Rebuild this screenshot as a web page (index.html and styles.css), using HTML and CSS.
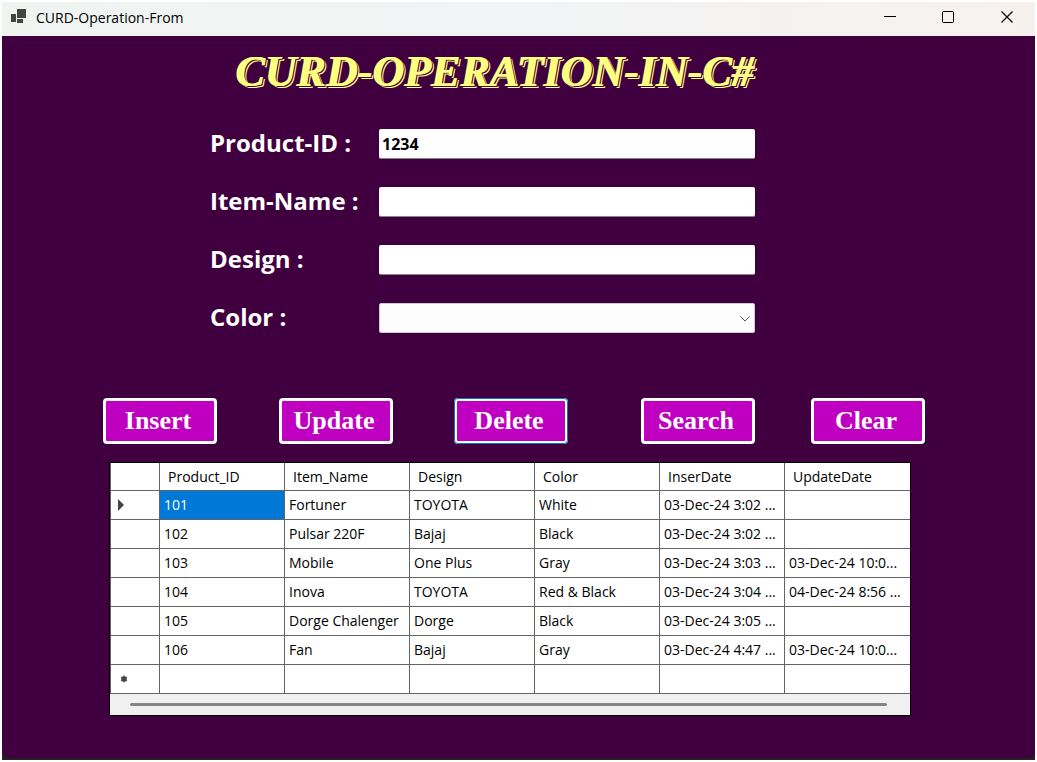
FILE: index.html
```html
<!DOCTYPE html>
<html lang="en">
<head>
<meta charset="utf-8">
<title>CURD-Operation-From</title>
<link rel="stylesheet" href="styles.css">
</head>
<body>
<div class="window">
  <header class="titlebar">
    <svg class="app-icon" width="16" height="16" viewBox="0 0 16 16" aria-hidden="true">
      <rect x="6" y="0" width="9" height="9" fill="#444"/>
      <rect x="0" y="5" width="5" height="8" fill="#444"/>
      <rect x="6" y="10" width="6" height="4" fill="#444"/>
    </svg>
    <span class="caption">CURD-Operation-From</span>
    <div class="window-controls">
      <button type="button" class="control" aria-label="Minimize"><svg width="12" height="12" viewBox="0 0 12 12"><path d="M0 5.5H12" stroke="#000"/></svg></button>
      <button type="button" class="control" aria-label="Maximize"><svg width="12" height="12" viewBox="0 0 12 12"><rect x=".5" y=".5" width="11" height="11" rx="1" fill="none" stroke="#000"/></svg></button>
      <button type="button" class="control" aria-label="Close"><svg width="12" height="12" viewBox="0 0 12 12"><path d="M.5 .5L11.5 11.5M11.5 .5L.5 11.5" stroke="#000" stroke-width="1.2"/></svg></button>
    </div>
  </header>
  <main class="client">
    <h1 class="heading">CURD-OPERATION-IN-C#</h1>
    <form class="fields">
      <label for="pid">Product-ID :</label><input id="pid" class="field" type="text" value="1234">
      <label for="item">Item-Name :</label><input id="item" class="field" type="text">
      <label for="design">Design :</label><input id="design" class="field" type="text">
      <label for="color">Color :</label>
      <div class="combo">
        <select id="color" class="field"><option></option><option>White</option><option>Black</option><option>Gray</option></select>
        <svg class="chevron" width="10" height="6" viewBox="0 0 10 6" aria-hidden="true"><path d="M.5 .5L5 5L9.5 .5" fill="none" stroke="#555"/></svg>
      </div>
    </form>
    <div class="actions">
      <button type="button" class="action">Insert</button>
      <button type="button" class="action">Update</button>
      <button type="button" class="action focused">Delete</button>
      <button type="button" class="action">Search</button>
      <button type="button" class="action">Clear</button>
    </div>
    <div class="grid">
      <table>
        <colgroup><col class="marker"><col><col><col><col><col><col></colgroup>
        <thead><tr><th></th><th>Product_ID</th><th>Item_Name</th><th>Design</th><th>Color</th><th>InserDate</th><th>UpdateDate</th></tr></thead>
        <tbody>
          <tr><td class="mark"><svg width="6" height="12" viewBox="0 0 6 12"><path d="M0 0L6 6L0 12Z" fill="#444"/></svg></td><td class="selected">101</td><td>Fortuner</td><td>TOYOTA</td><td>White</td><td>03-Dec-24 3:02 ...</td><td></td></tr>
          <tr><td></td><td>102</td><td>Pulsar 220F</td><td>Bajaj</td><td>Black</td><td>03-Dec-24 3:02 ...</td><td></td></tr>
          <tr><td></td><td>103</td><td>Mobile</td><td>One Plus</td><td>Gray</td><td>03-Dec-24 3:03 ...</td><td>03-Dec-24 10:0...</td></tr>
          <tr><td></td><td>104</td><td>Inova</td><td>TOYOTA</td><td>Red &amp; Black</td><td>03-Dec-24 3:04 ...</td><td>04-Dec-24 8:56 ...</td></tr>
          <tr><td></td><td>105</td><td>Dorge Chalenger</td><td>Dorge</td><td>Black</td><td>03-Dec-24 3:05 ...</td><td></td></tr>
          <tr><td></td><td>106</td><td>Fan</td><td>Bajaj</td><td>Gray</td><td>03-Dec-24 4:47 ...</td><td>03-Dec-24 10:0...</td></tr>
          <tr><td class="mark new"><svg width="8" height="8" viewBox="0 0 8 8"><path d="M4 .5V7.5M1 2L7 6M7 2L1 6" stroke="#777" stroke-width="1.4"/><circle cx="4" cy="4" r="2.8" fill="#444"/></svg></td><td></td><td></td><td></td><td></td><td></td><td></td></tr>
        </tbody>
      </table>
      <div class="scrollbar"><div class="thumb"></div></div>
    </div>
  </main>
</div>
</body>
</html>
```
FILE: styles.css
```css
* { box-sizing: border-box; }
body {
  margin: 0;
  padding: 2px;
  height: 100vh;
  background: #fff;
  font-family: "Open Sans", "Noto Sans", sans-serif;
}
.window {
  display: flex;
  flex-direction: column;
  height: 100%;
  padding-bottom: 2px;
  background: #222;
}
.titlebar {
  display: flex;
  align-items: center;
  height: 34px;
  padding: 0 0 4px 9px;
  gap: 9px;
  background: linear-gradient(90deg, #f0f4f1, #f1f3f4 50%, #f7f1ee);
}
.caption { flex: 1; padding-top: 2px; font-size: 14px; line-height: 20px; }
.window-controls { display: flex; }
.control {
  display: grid;
  place-items: center;
  width: 58px;
  height: 30px;
  padding: 0;
  border: 0;
  background: none;
}
.control:last-child { width: 56px; margin-left: 2px; }
.client {
  flex: 1;
  padding: 12px 110px 0 101px;
  border-radius: 0 0 6px 6px;
  background: #400040;
}
.heading {
  margin: 0 0 33px 132px;
  color: #ffff80;
  font: italic bold 44px/48px "Liberation Serif", serif;
  white-space: nowrap;
  text-shadow: 1px 0 #ffff80, 2px 1px #400040, 3px 2px #ffff80;
}
.fields {
  display: grid;
  grid-template-columns: 169px minmax(0, 376px);
  grid-auto-rows: 30px;
  row-gap: 28px;
  align-items: center;
  margin-left: 107px;
}
.fields label {
  padding-bottom: 2px;
  color: #fff;
  font-size: 24px;
  font-weight: 700;
  line-height: 30px;
  white-space: nowrap;
}
.field {
  display: block;
  width: 100%;
  height: 30px;
  padding: 0 3px;
  border: 0;
  border-bottom: 1px solid #868686;
  border-radius: 2px;
  background: #fff;
  color: #000;
  font: bold 16px/24px "Open Sans", "Noto Sans", sans-serif;
}
.combo { position: relative; }
select.field { appearance: none; background: #fdfdfd; border: 1px solid #ccc; }
.chevron { position: absolute; right: 5px; top: 13px; pointer-events: none; }
.actions {
  display: grid;
  grid-template-columns: 176fr 175fr 187fr 170fr 114px;
  margin: 65px 0 18px;
}
.action {
  width: 114px;
  height: 46px;
  padding: 0 4px 0 0;
  border: 3px solid #fff;
  border-radius: 4px;
  background: #c000c0;
  color: #fff;
  font: bold 26px/34px "Liberation Serif", serif;
}
.focused { outline: 1px solid #0078d4; outline-offset: -1px; }
.grid {
  margin: 0 14px 0 6px;
  border: 1px solid #000;
  background: #f0f0f0;
}
table {
  width: 100%;
  border-collapse: separate;
  border-spacing: 0;
  table-layout: fixed;
  background: #fff;
  font-size: 14px;
  line-height: 20px;
}
.marker { width: 50px; }
th, td {
  height: 29px;
  padding: 0 0 0 4px;
  border: 1px solid #646464;
  border-width: 0 1px 1px 0;
  text-align: left;
  font-weight: 400;
  white-space: nowrap;
  overflow: hidden;
}
th { height: 28px; padding-left: 8px; }
th:last-child, td:last-child { border-right: 0; }
th:first-child, td:first-child { border-left: 1px solid #646464; }
.mark { padding-left: 7px; }
.mark svg { display: block; }
.new { padding-left: 9px; }
.selected { background: #0078d7; color: #fff; }
.scrollbar { padding: 9px 23px 9px 20px; }
.thumb { height: 3px; border-radius: 2px; background: #858585; }
```
